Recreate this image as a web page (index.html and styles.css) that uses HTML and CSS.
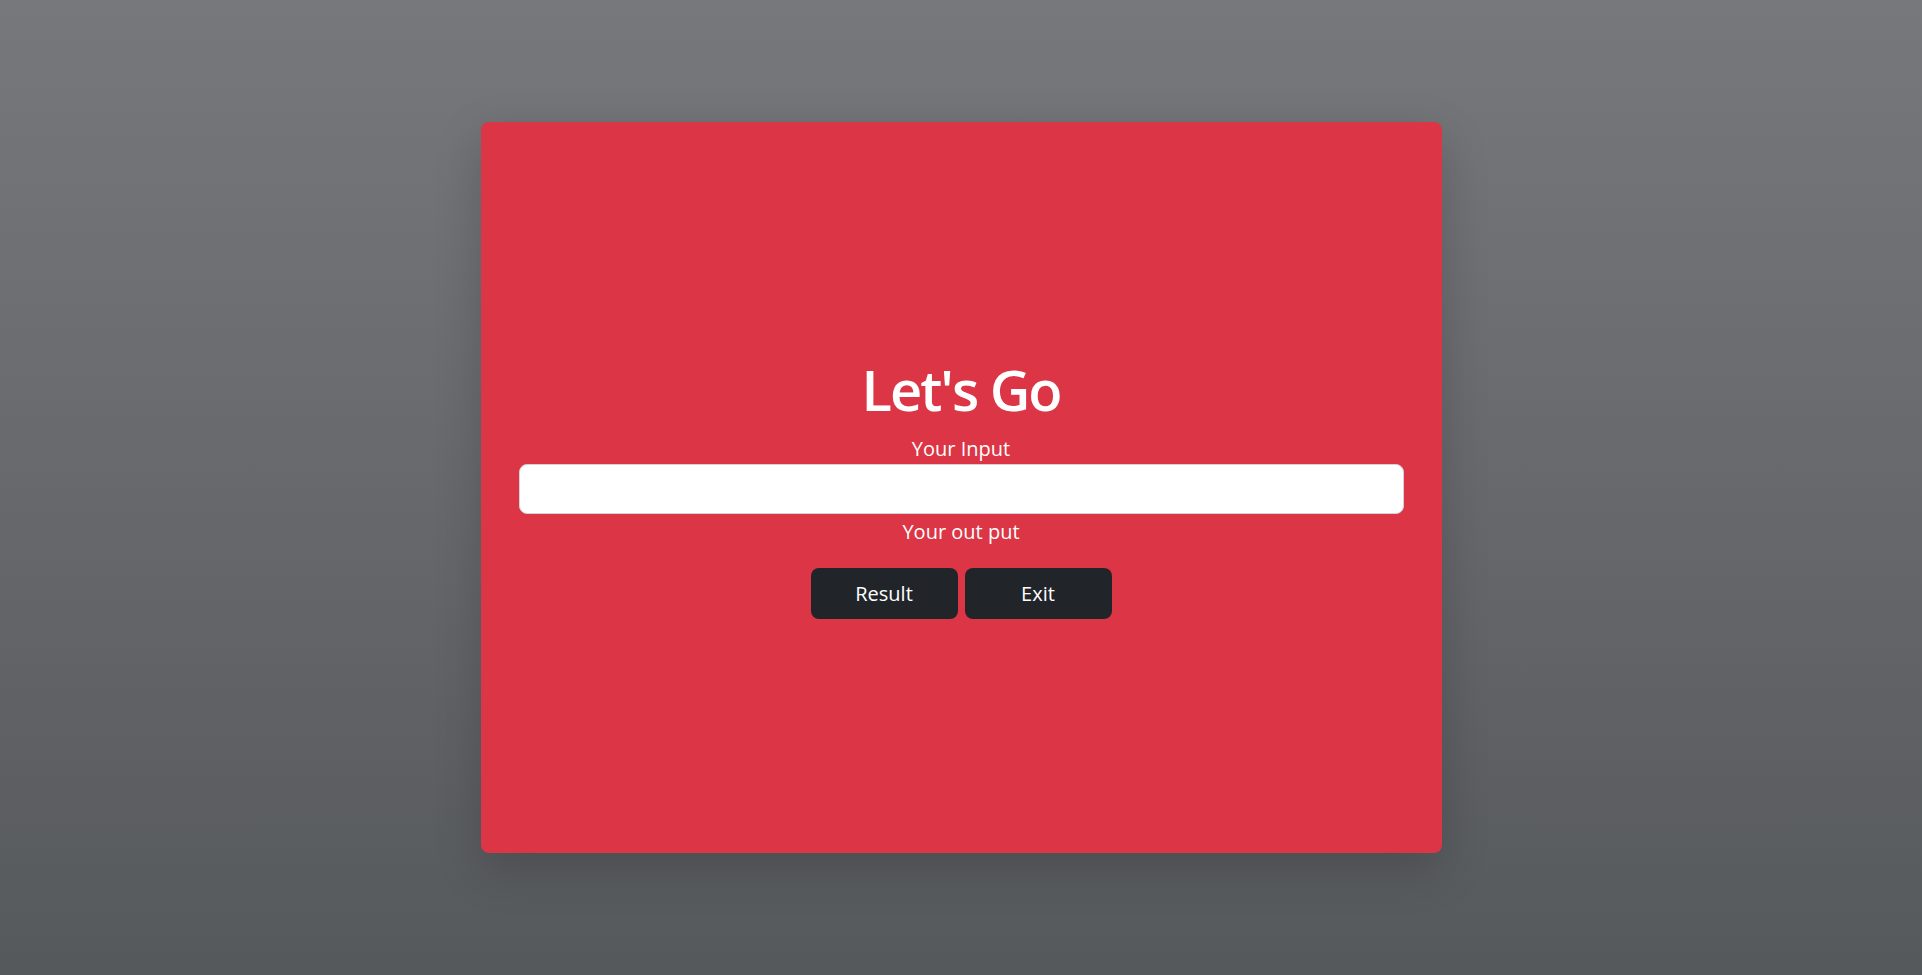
FILE: index.html
```html
<!DOCTYPE html>
<html lang="en">
<head>
<meta charset="utf-8">
<title>Let's Go</title>
<link rel="stylesheet" href="styles.css">
</head>
<body>
<main class="page">
  <section class="card">
    <h1 class="title">Let's Go</h1>
    <label class="label" for="inp">Your Input</label>
    <input class="field" id="inp" type="text">
    <div class="label output">Your out put</div>
    <div class="actions">
      <button class="btn" type="button">Result</button>
      <button class="btn" type="button">Exit</button>
    </div>
  </section>
</main>
</body>
</html>
```
FILE: styles.css
```css
html, body {
  margin: 0;
  padding: 0;
  height: 100%;
}
body {
  font-family: "Open Sans", "Noto Sans", sans-serif;
  background: linear-gradient(180deg, #77787b 0%, #56595c 100%);
  color: #fff;
}
.page {
  height: 100vh;
  display: flex;
  align-items: center;
  justify-content: center;
}
.card {
  width: 50%;
  height: 75vh;
  box-sizing: border-box;
  background: #dc3545;
  border-radius: 8px;
  box-shadow: 0 16px 48px rgba(0, 0, 0, 0.175);
  display: flex;
  flex-direction: column;
  align-items: center;
  justify-content: center;
  padding: 0 38px;
}
.title {
  margin: 0 0 11px;
  font-size: 56px;
  line-height: 1.2;
  font-weight: 650;
  letter-spacing: -2px;
}
.label {
  display: block;
  font-size: 20px;
  line-height: 30px;
}
.field {
  box-sizing: border-box;
  width: 100%;
  height: 50px;
  border: 1px solid #ced4da;
  border-radius: 8px;
  background: #fff;
  font-size: 20px;
  padding: 8px 16px;
  outline: none;
}
.output {
  margin-top: 3px;
}
.actions {
  display: flex;
  gap: 7px;
  margin-top: 21px;
}
.btn {
  width: 147px;
  height: 51px;
  border: 0;
  border-radius: 8px;
  background: #212529;
  color: #fff;
  font-family: inherit;
  font-size: 20px;
  cursor: pointer;
}
```
